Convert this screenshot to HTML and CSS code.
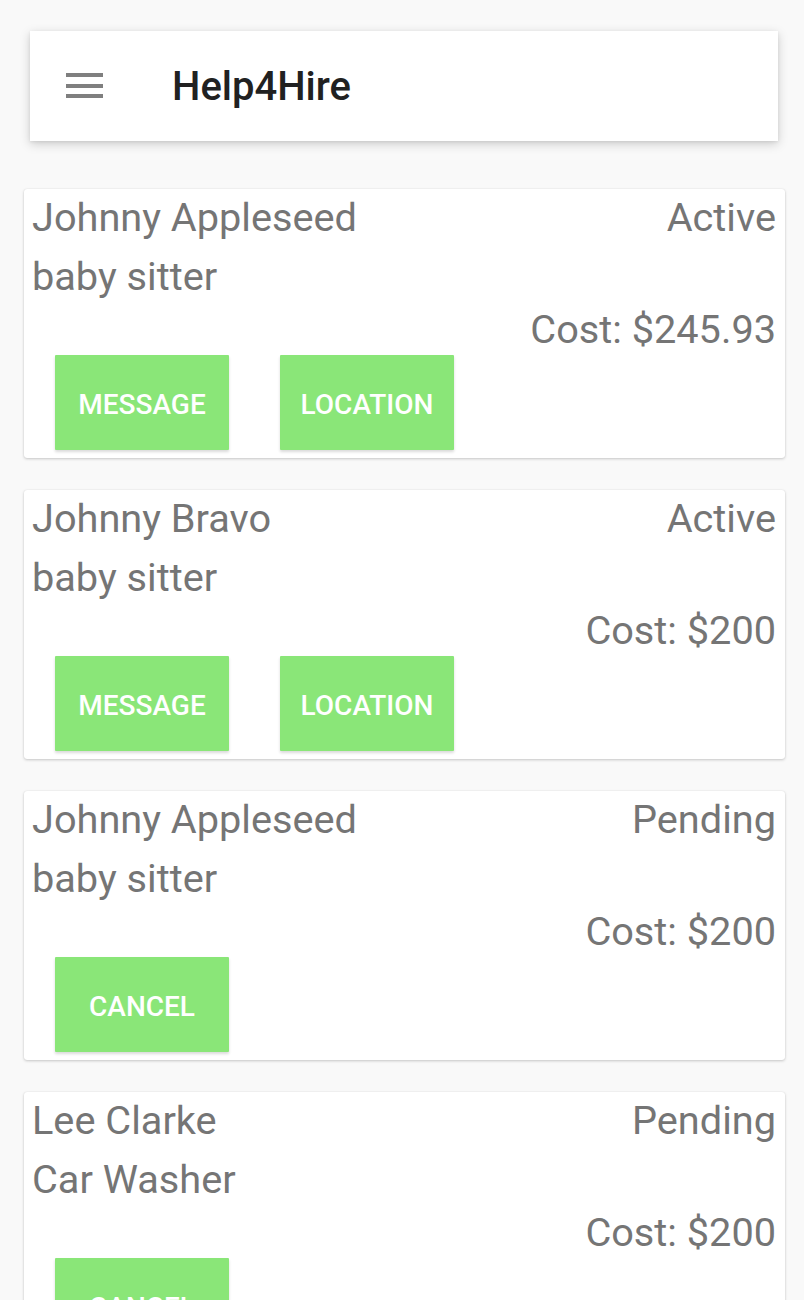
FILE: index.html
```html
<!DOCTYPE html>
<html lang="en">
<head>
<meta charset="utf-8">
<title>Help4Hire</title>
<link rel="stylesheet" href="styles.css">
</head>
<body>
<header class="toolbar">
  <span class="menu-icon" aria-label="menu">
    <svg width="37" height="26" viewBox="0 0 37 26"><rect x="0" y="0" width="37" height="4"/><rect x="0" y="11" width="37" height="4"/><rect x="0" y="21" width="37" height="4"/></svg>
  </span>
  <h1 class="title">Help4Hire</h1>
</header>

<main class="list">
  <section class="card">
    <div class="row"><span class="name">Johnny Appleseed</span><span class="status">Active</span></div>
    <div class="job">baby sitter</div>
    <div class="cost">Cost: $245.93</div>
    <div class="actions"><button class="btn">MESSAGE</button><button class="btn">LOCATION</button></div>
  </section>
  <section class="card">
    <div class="row"><span class="name">Johnny Bravo</span><span class="status">Active</span></div>
    <div class="job">baby sitter</div>
    <div class="cost">Cost: $200</div>
    <div class="actions"><button class="btn">MESSAGE</button><button class="btn">LOCATION</button></div>
  </section>
  <section class="card">
    <div class="row"><span class="name">Johnny Appleseed</span><span class="status">Pending</span></div>
    <div class="job">baby sitter</div>
    <div class="cost">Cost: $200</div>
    <div class="actions"><button class="btn">CANCEL</button></div>
  </section>
  <section class="card">
    <div class="row"><span class="name">Lee Clarke</span><span class="status">Pending</span></div>
    <div class="job">Car Washer</div>
    <div class="cost">Cost: $200</div>
    <div class="actions"><button class="btn">CANCEL</button></div>
  </section>
</main>
</body>
</html>
```
FILE: styles.css
```css
html, body {
  margin: 0;
  padding: 0;
  background: #f9f9f9;
  font-family: Roboto, "Liberation Sans", sans-serif;
}

.toolbar {
  margin: 31px 26px 0 30px;
  height: 110px;
  background: #fff;
  box-shadow: 0 3px 10px rgba(0, 0, 0, 0.18), 0 1px 3px rgba(0, 0, 0, 0.08);
  display: flex;
  align-items: center;
  padding-left: 36px;
}

.menu-icon {
  display: flex;
  width: 37px;
  height: 26px;
  fill: #7f7f7f;
}

.title {
  margin: 2px 0 0 69px;
  font-size: 40px;
  font-weight: 500;
  color: #212121;
  line-height: 1;
}

.list {
  margin: 48px 19px 0 24px;
}

.card {
  background: #fff;
  border-radius: 3px;
  box-shadow: 0 1px 3px rgba(0, 0, 0, 0.2), 0 0 1px rgba(0, 0, 0, 0.12);
  padding: 0 9px 8px 8px;
  margin-bottom: 32px;
  color: #757575;
  font-size: 39.7px;
}

.row {
  display: flex;
  justify-content: space-between;
  line-height: 57px;
}

.job {
  line-height: 61px;
}

.cost {
  text-align: right;
  line-height: 45px;
}

.actions {
  display: flex;
  gap: 51px;
  padding-left: 23px;
  margin-top: 3px;
}

.btn {
  width: 174px;
  height: 95px;
  border: 0;
  border-radius: 1px;
  background: #8ae678;
  color: #fff;
  font-family: Roboto, "Liberation Sans", sans-serif;
  font-size: 28px;
  font-weight: 500;
  padding: 4px 0 0 0;
  box-shadow: 0 2px 3px rgba(0, 0, 0, 0.15);
}
```
